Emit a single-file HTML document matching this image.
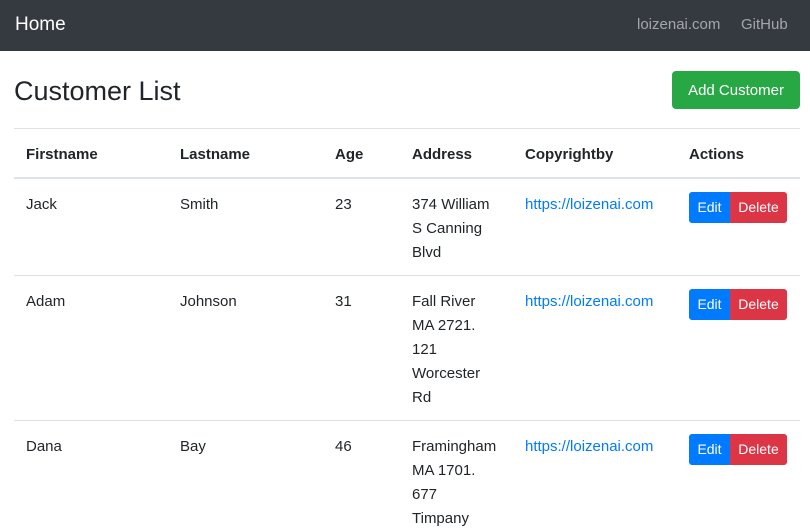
<!DOCTYPE html>
<html><head><meta charset="utf-8"><style>
*{margin:0;padding:0;box-sizing:border-box}
body{width:810px;height:516px;overflow:hidden;background:#fff;font-family:"Liberation Sans",sans-serif;color:#212529;font-size:15px;position:relative}
.nav{position:absolute;left:0;top:0;width:810px;height:51px;background:#343a40}
.a{position:absolute;white-space:nowrap}
.hr{position:absolute;left:14px;width:786px;height:1px;background:#dee2e6}
.btn{position:absolute;color:#fff;font-size:14px;text-align:center;line-height:31px;height:31px}
.lnk{color:#007bff}
.cell{position:absolute;line-height:24px}
</style></head><body>
<div class="nav"></div>
<div class="a" style="left:15px;top:13px;color:#fff;font-size:19px;line-height:24px">Home</div>
<div class="a" style="left:637px;top:15px;color:rgba(255,255,255,.55);font-size:15px;line-height:20px">loizenai.com</div>
<div class="a" style="left:741px;top:15px;color:rgba(255,255,255,.55);font-size:15px;line-height:20px">GitHub</div>
<div class="a" style="left:14px;top:74px;font-size:27px;line-height:34px">Customer List</div>
<div class="btn" style="left:672px;top:71px;width:128px;height:38px;line-height:39px;background:#28a745;border-radius:4px;font-size:15px">Add Customer</div>
<div class="hr" style="top:128px"></div>
<div class="cell" style="top:143px;left:26px;font-weight:bold">Firstname</div>
<div class="cell" style="top:143px;left:180px;font-weight:bold">Lastname</div>
<div class="cell" style="top:143px;left:335px;font-weight:bold">Age</div>
<div class="cell" style="top:143px;left:412px;font-weight:bold">Address</div>
<div class="cell" style="top:143px;left:525px;font-weight:bold">Copyrightby</div>
<div class="cell" style="top:143px;left:689px;font-weight:bold">Actions</div>
<div class="hr" style="top:177px;height:2px"></div>

<div class="cell" style="top:193px;left:26px">Jack</div>
<div class="cell" style="top:193px;left:180px">Smith</div>
<div class="cell" style="top:193px;left:335px">23</div>
<div class="cell" style="top:193px;left:412px">374 William<br>S Canning<br>Blvd</div>
<div class="cell lnk" style="top:193px;left:525px">https://loizenai.com</div>
<div class="btn" style="left:689px;top:192px;width:41px;background:#007bff;border-radius:3px 0 0 3px">Edit</div>
<div class="btn" style="left:730px;top:192px;width:57px;background:#dc3545;border-radius:0 3px 3px 0">Delete</div>
<div class="hr" style="top:275px"></div>

<div class="cell" style="top:290px;left:26px">Adam</div>
<div class="cell" style="top:290px;left:180px">Johnson</div>
<div class="cell" style="top:290px;left:335px">31</div>
<div class="cell" style="top:290px;left:412px">Fall River<br>MA 2721.<br>121<br>Worcester<br>Rd</div>
<div class="cell lnk" style="top:290px;left:525px">https://loizenai.com</div>
<div class="btn" style="left:689px;top:289px;width:41px;background:#007bff;border-radius:3px 0 0 3px">Edit</div>
<div class="btn" style="left:730px;top:289px;width:57px;background:#dc3545;border-radius:0 3px 3px 0">Delete</div>
<div class="hr" style="top:420px"></div>

<div class="cell" style="top:435px;left:26px">Dana</div>
<div class="cell" style="top:435px;left:180px">Bay</div>
<div class="cell" style="top:435px;left:335px">46</div>
<div class="cell" style="top:435px;left:412px">Framingham<br>MA 1701.<br>677<br>Timpany</div>
<div class="cell lnk" style="top:435px;left:525px">https://loizenai.com</div>
<div class="btn" style="left:689px;top:434px;width:41px;background:#007bff;border-radius:3px 0 0 3px">Edit</div>
<div class="btn" style="left:730px;top:434px;width:57px;background:#dc3545;border-radius:0 3px 3px 0">Delete</div>
</body></html>
